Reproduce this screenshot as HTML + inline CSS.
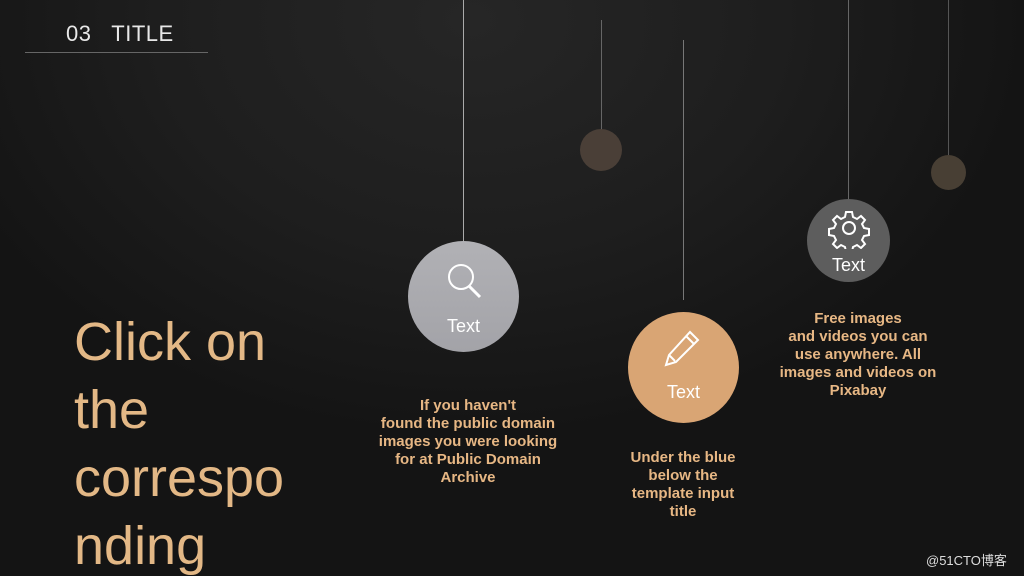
<!DOCTYPE html>
<html><head><meta charset="utf-8"><style>
*{margin:0;padding:0;box-sizing:border-box}
html,body{width:1024px;height:576px;overflow:hidden}
body{position:relative;font-family:"Liberation Sans",sans-serif;
background:radial-gradient(ellipse 560px 420px at 470px 20px,#262626 0%,#1e1e1e 55%,#141414 100%);}
.abs{position:absolute}
.line{position:absolute;width:1px;background:#8a8a8a}
.circ{position:absolute;border-radius:50%;text-align:center;color:#fff;font-size:18px}
.p{position:absolute;color:#e7b784;font-weight:bold;font-size:15px;line-height:18px;text-align:center;white-space:nowrap}
</style></head><body>
<div class="abs" style="left:66px;top:21px;color:#e8e8e8;font-size:22px;letter-spacing:0.5px">03&nbsp;&nbsp;&nbsp;TITLE</div>
<div class="abs" style="left:25px;top:52px;width:183px;height:1px;background:#666"></div>
<div class="abs" style="left:74px;top:308px;color:#e3b886;font-size:54px;line-height:68px">Click on<br>the<br>correspo<br>nding</div>

<div class="line" style="left:463px;top:0;height:243px;background:#aaa"></div>
<div class="line" style="left:601px;top:20px;height:110px;background:#666"></div>
<div class="line" style="left:683px;top:40px;height:260px;background:#777"></div>
<div class="line" style="left:848px;top:0;height:200px;background:#666"></div>
<div class="line" style="left:948px;top:0;height:155px;background:#555"></div>

<div class="circ" style="left:580px;top:129px;width:42px;height:42px;background:#4a3f37"></div>
<div class="circ" style="left:931px;top:155px;width:35px;height:35px;background:#483f34"></div>

<div class="circ" style="left:408px;top:241px;width:111px;height:111px;background:linear-gradient(#b1b1b5,#a3a3a8)">
<svg class="abs" style="left:34px;top:18px" width="44" height="44" viewBox="0 0 44 44" fill="none" stroke="#fff" stroke-width="2"><circle cx="19" cy="18" r="12"/><path d="M27 27l11 11" stroke-width="3"/></svg>
<div class="abs" style="left:0;right:0;top:75px">Text</div></div>

<div class="circ" style="left:628px;top:312px;width:111px;height:111px;background:#d9a574">
<svg class="abs" style="left:32px;top:14px" width="44" height="44" viewBox="0 0 44 44" fill="none" stroke="#fff" stroke-width="2"><path d="M30 6l8 8L16 36l-10 3 3-10z M26 10l8 8 M9 29l6 6"/></svg>
<div class="abs" style="left:0;right:0;top:70px">Text</div></div>

<div class="circ" style="left:807px;top:199px;width:83px;height:83px;background:#5d5d5d">
<svg class="abs" style="left:21px;top:8px" width="42" height="42" viewBox="0 0 42 42" fill="none" stroke="#fff" stroke-width="2"><circle cx="21" cy="21" r="6"/><path d="M18 5h6l1 5 4 2 4-3 4 4-3 4 2 4 5 1v6l-5 1-2 4 3 4-4 4-4-3-4 2-1 5h-6l-1-5-4-2-4 3-4-4 3-4-2-4-5-1v-6l5-1 2-4-3-4 4-4 4 3 4-2z"/></svg>
<div class="abs" style="left:0;right:0;top:56px">Text</div></div>

<div class="p" style="left:368px;top:397px;width:200px">If you haven't<br>found the public domain<br>images you were looking<br>for at Public Domain<br>Archive</div>
<div class="p" style="left:600px;top:449px;width:166px">Under the blue<br>below the<br>template input<br>title</div>
<div class="p" style="left:770px;top:310px;width:176px">Free images<br>and videos you can<br>use anywhere. All<br>images and videos on<br>Pixabay</div>
<div class="abs" style="left:926px;top:550px;color:#ddd;font-size:13px;font-family:'Liberation Sans','Noto Sans CJK SC',sans-serif">@51CTO博客</div>
</body></html>
